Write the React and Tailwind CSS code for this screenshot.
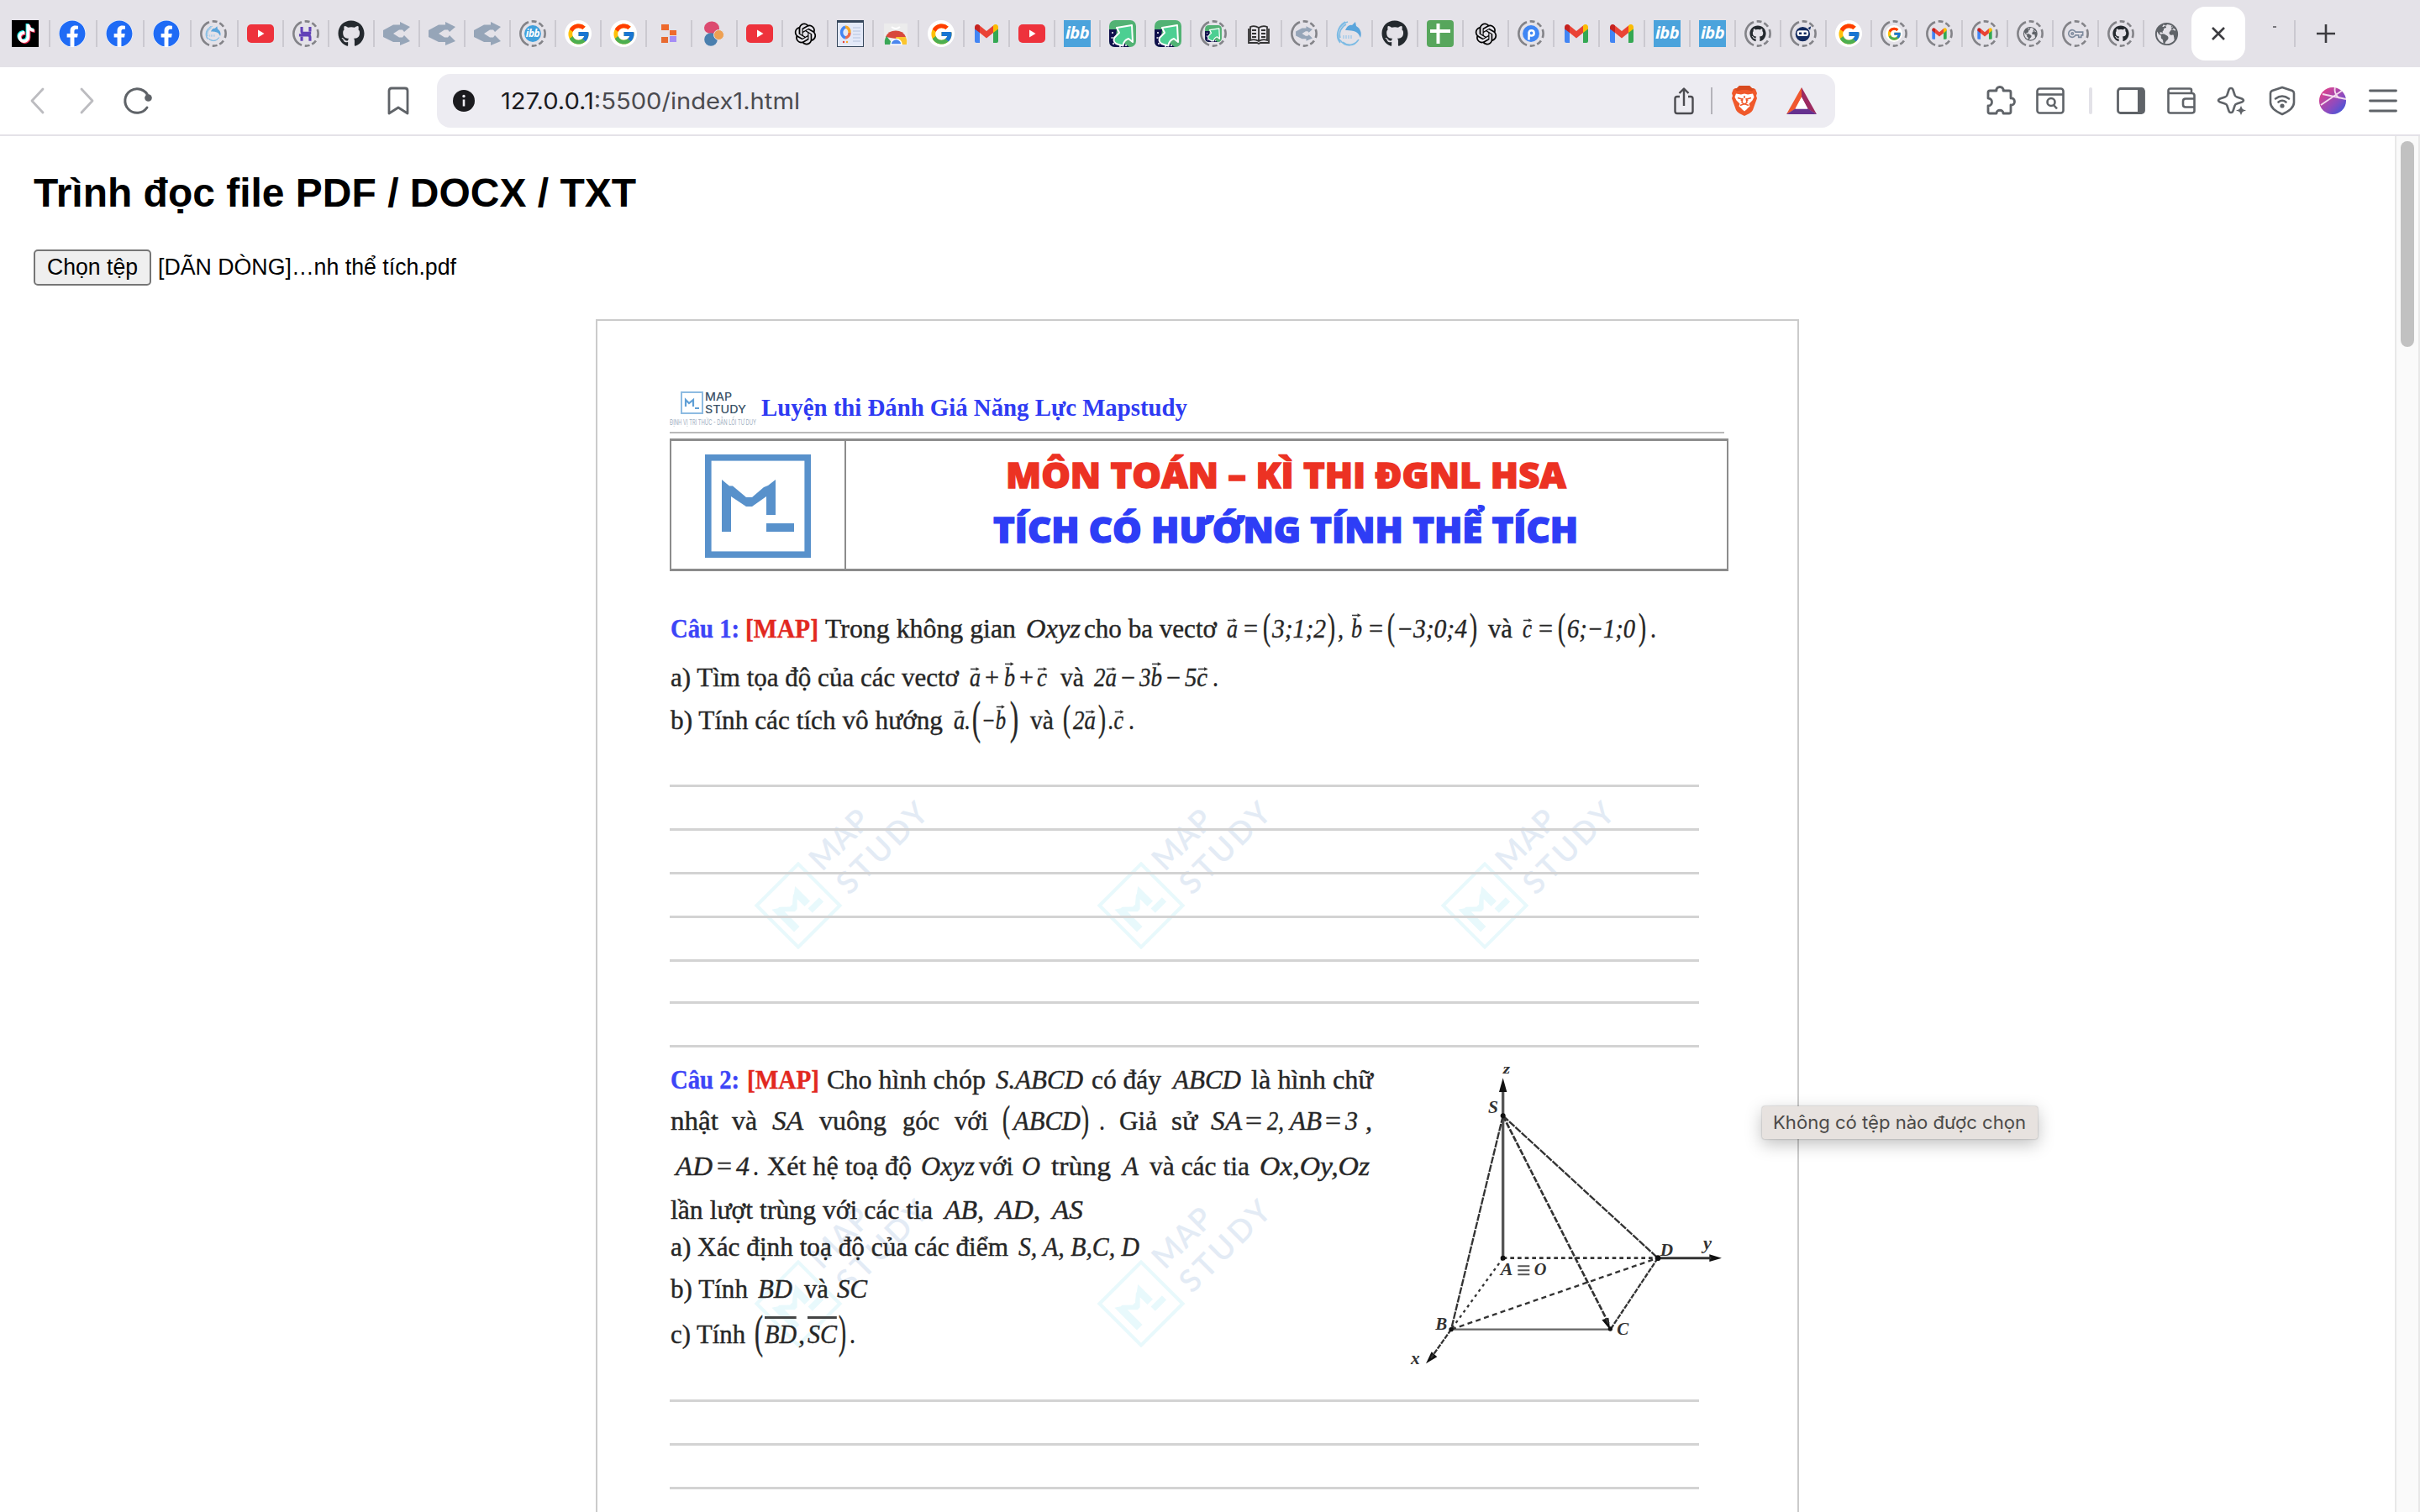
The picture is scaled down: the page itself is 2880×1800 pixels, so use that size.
import { useLayoutEffect, useRef } from "react";
import { FaFacebook, FaGithub, FaTiktok } from "react-icons/fa";
import { FcGoogle } from "react-icons/fc";
import { RiOpenaiFill } from "react-icons/ri";
import { IoEarth } from "react-icons/io5";

/* Stretches a run of text horizontally so that it fills exactly `w` pixels. */
function Fit({ w, children, className = "" }) {
  const ref = useRef(null);
  useLayoutEffect(() => {
    const el = ref.current;
    el.style.transform = "none";
    const natural = el.getBoundingClientRect().width;
    if (natural > 0) el.style.transform = `scaleX(${w / natural})`;
  }, [w]);
  return (
    <span className="inline-block whitespace-nowrap" style={{ width: w }}>
      <span ref={ref} className={`inline-block origin-left whitespace-pre ${className}`}>
        {children}
      </span>
    </span>
  );
}

/* ---------- favicons ---------- */

const YouTube = () => (
  <svg viewBox="0 0 32 32" className="size-8">
    <rect x="0" y="5" width="32" height="22" rx="5" fill="#ee323c" />
    <path d="M13 11.5 20.5 16 13 20.5z" fill="#fff" />
  </svg>
);
const TikTok = () => (
  <div className="relative flex size-8 items-center justify-center bg-black">
    <FaTiktok className="absolute left-[5px] top-[4px] size-[22px] text-[#25f4ee]" />
    <FaTiktok className="absolute left-[7px] top-[6px] size-[22px] text-[#fe2c55]" />
    <FaTiktok className="absolute left-[6px] top-[5px] size-[22px] text-white" />
  </div>
);
const Facebook = () => (
  <div className="flex size-8 items-center justify-center rounded-full bg-white">
    <FaFacebook className="size-8 text-[#1f6bf5]" />
  </div>
);
const Github = () => <FaGithub className="size-8 text-[#24292e]" />;
const Google = () => (
  <div className="flex size-8 items-center justify-center rounded-full bg-white">
    <FcGoogle className="size-[29px]" />
  </div>
);
const OpenAI = () => <RiOpenaiFill className="size-[31px] text-black" />;
const Globe = () => <IoEarth className="size-[31px] text-[#5f6368]" />;
const Gmail = () => (
  <svg viewBox="0 0 32 32" className="size-8">
    <path d="M2 8.5V25q0 2 2 2h4V13.500z" fill="#4285f4" />
    <path d="M30 8.500V25q0 2-2 2h-4V13.500z" fill="#34a853" />
    <path d="M8 6.500 16 13l8-6.500v8.500L16 21.500 8 15z" fill="#ea4335" />
    <path d="M2 8.500C2 5 5.500 4 8 6.300V15l-6-4.500z" fill="#c5221f" />
    <path d="M30 8.500C30 5 26.500 4 24 6.300V15l6-4.500z" fill="#fbbc04" />
  </svg>
);
const CShare = () => (
  <svg viewBox="0 0 32 32" className="size-8">
    <path d="M20 2 32 8 25 14 23 11.500H19L12 16l7 4.500H23L25 18l7 7L20 30V26H12L0 20V12L12 5.500H20z" fill="#96a5b8" />
  </svg>
);
const Ibb = () => (
  <div className="flex size-8 items-center justify-center bg-[#4ba3dc] pb-[3px] font-['Open_Sans',sans-serif] text-[20px] font-bold italic leading-none tracking-tight text-white">
    ibb
  </div>
);
const IbbRound = () => (
  <div className="flex size-8 items-center justify-center overflow-hidden rounded-full bg-[#3fa0dc] pb-[2px] font-['Open_Sans',sans-serif] text-[19px] font-bold italic leading-none tracking-tight text-white">
    ibb
  </div>
);
const Dolphin = () => (
  <svg viewBox="0 0 32 32" className="size-8" fill="none">
    <path d="M14 2C4 5-1 16 5 25M11 2C1 8-1 20 5 27M5 24c6 8 17 8 22-1M8 26c6 5 14 4 18-2M12 5C6 8 3 15 5 21" stroke="#7dbbe4" strokeWidth="1.500" />
    <path d="M11 12C13 7 16 5 19 6l4-4 1 5c5 3 7 8 5 14-2-5-4-7-8-8-4-1-7-1-10-1z" fill="#5aa5dc" />
    <path d="M9 18v4M12 18v4M15 18v4M18 18v4" stroke="#9cc8ea" strokeWidth="1.300" />
  </svg>
);
const PurpleH = () => (
  <svg viewBox="0 0 32 32" className="size-8" fill="none" stroke="#6142b8" strokeWidth="5">
    <path d="M8 3v9q0 3 4 3h14M24 3v9M3 19h17q4 0 4 4v7M8 22v8" />
  </svg>
);
const Blocks = () => (
  <svg viewBox="0 0 32 32" className="size-8">
    <path d="M7 5h9v7h9v6h-8v-6H7z" fill="#ee6a2d" />
    <rect x="7" y="20" width="8" height="7" fill="#e86a30" />
    <rect x="17" y="19" width="8" height="7" fill="#a58df5" />
  </svg>
);
const Circles = () => (
  <svg viewBox="0 0 32 32" className="size-8">
    <path d="M4 9a9 8 0 0 1 18 1q0 4 1 6-5 3-10 0Q4 16 4 9z" fill="#dc4a70" />
    <circle cx="12" cy="23" r="7.800" fill="#4a7fae" />
    <circle cx="21.500" cy="17.500" r="6" fill="#eea052" stroke="#e4e2e8" />
  </svg>
);
const ChartDoc = () => (
  <svg viewBox="0 0 32 32" className="size-8">
    <rect width="32" height="32" fill="#36475c" />
    <rect x="1" y="3" width="30" height="28" fill="#e3e9f8" />
    <g fill="none" strokeWidth="3.500">
      <path d="M10 8a6 6 0 0 1 5 7" stroke="#f9a825" />
      <path d="M15 15a6 6 0 0 1-5 6" stroke="#ee6a4a" />
      <path d="M10 21a7 7 0 0 1 0-13" stroke="#4285f4" />
    </g>
    <path d="M19 9h9M19 13h9M19 17h9M19 21h9M19 25h9" stroke="#c5cfe6" strokeWidth="1.500" />
    <circle cx="8" cy="26" r="1.200" fill="#ea4335" />
    <circle cx="12" cy="26" r="1.200" fill="#f9a825" />
  </svg>
);
const WebStore = () => (
  <svg viewBox="0 0 32 32" className="size-8">
    <rect x="2" y="4" width="28" height="25" fill="#ececec" />
    <path d="M11 8q5 4 10 0" fill="none" stroke="#fff" strokeWidth="2" />
    <path d="M4 20a13 12 0 0 1 24 0l-12 2z" fill="#d8483c" />
    <path d="M3 29q-1-6 2-10l8 10z" fill="#3aa757" />
    <path d="M29 29q1-5-1-9H16l4 9z" fill="#fbc52d" />
    <path d="M10 29a6.500 6.500 0 0 1 13 0z" fill="#4a86ee" stroke="#fff" strokeWidth="1.500" />
  </svg>
);
const GreenArrow = () => (
  <svg viewBox="0 0 32 32" className="size-8">
    <rect width="32" height="32" rx="7" fill="#52b274" />
    <path d="M0 11h9l-1 9 16 12H7q-7 0-7-7z" fill="#10104c" />
    <path d="M9 9 27 6l1 20-5-4q-6 2-6.500 8.500L11 29Q4 27 6 21l6-6z" fill="#4ccf92" stroke="#fff" strokeWidth="2" strokeLinejoin="round" />
    <path d="M3 15h2M2.500 21h2M4 28h2M12 31h2M19 30h2" stroke="#fff" strokeWidth="1.500" />
  </svg>
);
const Book = () => (
  <svg viewBox="0 0 32 32" className="size-8" fill="none" stroke="#333" strokeWidth="1.800">
    <path d="M16 9Q11 6 6 8v16q5-2 10 1 5-3 10-1V8q-5-2-10 1zM16 9v15M4 10v17h10l2 1 2-1h10V10" />
    <path d="M8 12h5M8 16h5M8 20h5M19 12h5M19 16h5M19 20h5" />
  </svg>
);
const Sheets = () => (
  <svg viewBox="0 0 32 32" className="size-8">
    <rect width="32" height="32" rx="4" fill="#57a65c" />
    <path d="M13.500 4v24M4 13h24" stroke="#fff" strokeWidth="4" />
  </svg>
);
const PBlue = () => (
  <svg viewBox="0 0 32 32" className="size-8" fill="none">
    <circle cx="16" cy="16" r="16" fill="#3f86f4" />
    <path d="M12 28V13M12 16a5 5 0 1 0 5-6q-5 0-5 6" stroke="#fff" strokeWidth="4" />
  </svg>
);
const Ninja = () => (
  <svg viewBox="0 0 32 32" className="size-8">
    <circle cx="15" cy="17" r="14" fill="#132b60" />
    <path d="m25 5 6-3-2 7z" fill="#132b60" />
    <rect x="4" y="10" width="22" height="11" rx="5" fill="#fff" />
    <path d="M8 15.500h5M17 15.500h5" stroke="#132b60" strokeWidth="4" />
  </svg>
);
const Key = () => (
  <svg viewBox="0 0 32 32" className="size-8" fill="none" stroke="#7d8a9d" strokeWidth="2.600">
    <path d="M16 13h14v6h-3v4h-5v-4h-6a7 7 0 1 1 0-6z" />
    <circle cx="10" cy="16" r="2" />
  </svg>
);

/* Dashed ring drawn round the icon of an unloaded tab. */
function Ring({ children }) {
  return (
    <div className="relative flex size-8 items-center justify-center">
      <svg viewBox="0 0 32 32" className="absolute inset-0 size-8" fill="none">
        <circle
          cx="16" cy="16" r="14.600" pathLength="360" stroke="#838388" strokeWidth="2.600"
          strokeDasharray="40 15 25 12 23 15 140 15 23 12 25 15" transform="rotate(-20 16 16)"
        />
      </svg>
      <div className="flex size-8 scale-[0.62] items-center justify-center">{children}</div>
    </div>
  );
}
const ring = (Icon) => () => <Ring><Icon /></Ring>;

const TABS = [
  TikTok, Facebook, Facebook, Facebook, ring(Dolphin), YouTube, ring(PurpleH), Github,
  CShare, CShare, CShare, ring(IbbRound), Google, Google, Blocks, Circles,
  YouTube, OpenAI, ChartDoc, WebStore, Google, Gmail, YouTube, Ibb,
  GreenArrow, GreenArrow, ring(GreenArrow), Book, ring(CShare), Dolphin, Github, Sheets,
  OpenAI, ring(PBlue), Gmail, Gmail, Ibb, Ibb, ring(Github), ring(Ninja),
  Google, ring(Google), ring(Gmail), ring(Gmail), ring(Globe), ring(Key), ring(Github), Globe,
];

function TabStrip() {
  return (
    <div className="flex h-20 items-center bg-[#e4e2e8] pl-[2px]">
      {TABS.map((Icon, i) => (
        <div
          key={i}
          className={`flex h-8 shrink-0 items-center border-l-2 pl-[10px] ${i < 5 ? "w-14" : "w-[54px]"} ${i === 0 ? "border-transparent" : "border-[#cbc9d0]"}`}
        >
          <div className="flex size-8 items-center justify-center">
            <Icon />
          </div>
        </div>
      ))}
      <div className="ml-1 flex h-16 w-16 shrink-0 items-center justify-center rounded-[16px] bg-white">
        <svg viewBox="0 0 16 16" className="size-4" stroke="#3c3c40" strokeWidth="2.600">
          <path d="M1 1l14 14M15 1 1 15" />
        </svg>
      </div>
      <div className="mb-4 ml-[33px] h-[2px] w-1 bg-[#77777c]" />
      <div className="ml-[21px] h-8 w-[2px] bg-[#cbc9d0]" />
      <svg viewBox="0 0 22 22" className="ml-[25px] size-[22px]" stroke="#3c3c40" strokeWidth="2.600">
        <path d="M11 0v22M0 11h22" />
      </svg>
    </div>
  );
}

/* ---------- toolbar ---------- */

function Lion() {
  return (
    <svg viewBox="0 0 32 36" className="h-9 w-8">
      <path d="M10 0h12l3 3 4 1 2 5-1 3 1 3-5 14q-1 2-4 4l-6 3-6-3q-3-2-4-4L1 15l1-3-1-3 2-5 4-1z" fill="#f0592b" />
      <path d="M10 0h12l3 3 3 .5-3 3-6-1.500h-6L7 6.500 4 3.500 7 3z" fill="#d84a1f" />
      <path d="M6 9.500l6 1 4-1 4 1 6-1 1.500 4-2 4-4 4 1 3-4 3.500-2.500-2.500-2.500 2.500L9.500 24.500l1-3-4-4-2-4z" fill="#fff" />
      <path d="M8 14.500l5 1.500-1 2M24 14.500 19 16l1 2M16 12v3M14 15l-1 5 3 2 3-2-1-5M11 23.500l5-2 5 2" fill="none" stroke="#f0592b" strokeWidth="1.500" />
      <path d="M12.500 27.500l3.500-2.500 3.500 2.500-3.500 3z" fill="#fff" />
    </svg>
  );
}

function Toolbar() {
  return (
    <div className="flex h-[82px] items-center border-b-2 border-[#e4e2e8] bg-white text-[#5f6368]">
      <svg viewBox="0 0 18 32" className="ml-[35px] h-8 w-[18px]" fill="none" stroke="#bcbcc0" strokeWidth="2.800" strokeLinecap="round" strokeLinejoin="round">
        <path d="M16 2 3 16l13 14" />
      </svg>
      <svg viewBox="0 0 18 32" className="ml-[42px] h-8 w-[18px]" fill="none" stroke="#bcbcc0" strokeWidth="2.800" strokeLinecap="round" strokeLinejoin="round">
        <path d="M2 2l13 14L2 30" />
      </svg>
      <svg viewBox="0 0 36 36" className="ml-[33px] size-9" fill="none" stroke="currentColor" strokeWidth="3">
        <path d="M29 26A14.300 14.300 0 1 1 30.500 13" strokeLinecap="round" />
        <circle cx="30.500" cy="14.500" r="4.300" fill="currentColor" stroke="none" />
      </svg>
      <svg viewBox="0 0 26 36" className="ml-[279px] h-9 w-[26px]" fill="none" stroke="currentColor" strokeWidth="2.800" strokeLinejoin="round">
        <path d="M5 3h16q3 0 3 3v27l-11-7-11 7V6q0-3 3-3z" />
      </svg>

      <div className="ml-[33px] flex h-16 w-[1664px] items-center rounded-[16px] bg-[#edecf2]">
        <svg viewBox="0 0 26 26" className="ml-[19px] size-[26px]">
          <circle cx="13" cy="13" r="13" fill="#1b1b1f" />
          <path d="M13 11.500v8" stroke="#edecf2" strokeWidth="2.600" />
          <circle cx="13" cy="7.500" r="1.700" fill="#edecf2" />
        </svg>
        <div className="ml-[31px] w-[1396px] pt-px font-['Inter',sans-serif] text-[27px] leading-[40px] text-[#4b4b50]">
          <Fit w={356}>
            <span className="text-[#1b1b1f]">127.0.0.1</span>:5500/index1.html
          </Fit>
        </div>
        <svg viewBox="0 0 24 34" className="h-[34px] w-6" fill="none" stroke="#4b4b50" strokeWidth="2.400" strokeLinejoin="round">
          <path d="M7 12H4q-2.500 0-2.500 2.500v15Q1.500 32 4 32h16q2.500 0 2.500-2.500v-15Q22.500 12 20 12h-3M12 23V3M6.500 8 12 2.500 17.500 8" />
        </svg>
        <div className="ml-5 h-8 w-[2px] bg-[#b4b3ba]" />
        <div className="ml-[22px]">
          <Lion />
        </div>
        <svg viewBox="0 0 38 34" className="ml-[33px] h-[34px] w-[38px]">
          <path d="M19 1 1 33l10.500-6L19 13z" fill="#f0582f" />
          <path d="M19 1l18 32-10.500-6L19 13z" fill="#9c2a60" />
          <path d="M1 33h36l-10.500-6.500h-15z" fill="#65318f" />
          <path d="M19 12.500 11.500 26.500h15z" fill="#fff" />
        </svg>
      </div>

      <svg viewBox="0 0 36 36" className="ml-[179px] size-9" fill="none" stroke="currentColor" strokeWidth="2.800" strokeLinejoin="round">
        <path d="M5 6h8c-1-6 9-6 8 0h7q2 0 2 2v7c6-1 6 9 0 8v8q0 2-2 2h-7c0-5-8-5-8 0H5q-2 0-2-2v-7c6 0 6-9 0-9V8q0-2 2-2z" />
      </svg>
      <svg viewBox="0 0 34 34" className="ml-[24px] size-[34px]" fill="none" stroke="currentColor" strokeWidth="2.600">
        <rect x="1.500" y="2.500" width="31" height="29" rx="3" />
        <path d="M1.500 9.500h31" />
        <circle cx="18" cy="18.500" r="4.500" />
        <path d="m21 22 4 4.500" />
      </svg>
      <div className="ml-[29px] h-8 w-1 rounded bg-[#e3e2e8]" />
      <svg viewBox="0 0 34 34" className="ml-[29px] size-[34px]" fill="none" stroke="currentColor" strokeWidth="2.800">
        <rect x="1.500" y="2.500" width="31" height="29" rx="3" />
        <path d="M25 2h6q2 0 2 2v26q0 2-2 2h-6z" fill="currentColor" stroke="none" />
      </svg>
      <svg viewBox="0 0 34 34" className="ml-[26px] size-[34px]" fill="none" stroke="currentColor" strokeWidth="2.600" strokeLinejoin="round">
        <path d="M29 8V4q0-1.500-2-1.500H4Q1.500 2.500 1.500 5v24q0 2.500 2.500 2.500h25q3.500 0 3.500-2.500V10.500Q32.500 8 29 8H4Q1.500 8 1.500 5M32 14.500H22q-3 0-3 3v4q0 3 3 3h10" />
      </svg>
      <svg viewBox="0 0 36 36" className="ml-[25px] size-9" fill="none" stroke="currentColor" strokeWidth="2.600" strokeLinejoin="round">
        <path d="M17 3q2 0 2.500 2l2 6q.5 2 2.500 2.500l6 2q2 1 2 2t-2 2l-6 2q-2 .5-2.500 2.500l-2 6q-.5 2-2.500 2t-2.500-2l-2-6Q12 22 10 21.500l-6-2q-2-1-2-2t2-2l6-2q2-.5 2.500-2.500l2-6Q15 3 17 3z" />
        <path d="m29 22.500 2 5 5 2-5 2-2 5-2-5-5-2 5-2z" fill="currentColor" stroke="#fff" strokeWidth="1" />
      </svg>
      <svg viewBox="0 0 32 36" className="ml-[26px] h-9 w-8" fill="none" stroke="currentColor" strokeWidth="2.600" strokeLinecap="round">
        <path d="M16 2 4 6Q2 7 2 9v11q0 8 14 14 14-6 14-14V9q0-2-2-3z" strokeLinejoin="round" />
        <path d="M8 15.500q8-6 16 0M11.500 19.500q4.500-3.500 9 0" />
        <circle cx="16" cy="24" r="2.600" fill="currentColor" stroke="none" />
      </svg>
      <svg viewBox="0 0 32 32" className="ml-[28px] size-8">
        <defs>
          <linearGradient id="avatar" x1="0" y1="0" x2="1" y2="1">
            <stop offset="0.150" stopColor="#d94390" />
            <stop offset="0.600" stopColor="#8c4bc0" />
            <stop offset="1" stopColor="#2c5be0" />
          </linearGradient>
        </defs>
        <circle cx="16" cy="16" r="16" fill="url(#avatar)" />
        <path d="M2 21 27 4M4 8l28 6M19 0q-2 7 5 13" fill="none" stroke="#f4dcee" strokeWidth="1.800" />
      </svg>
      <svg viewBox="0 0 34 28" className="ml-[27px] h-7 w-[34px]" stroke="currentColor" strokeWidth="2.800" strokeLinecap="round">
        <path d="M1.500 2h31M1.500 14h31M1.500 26h31" />
      </svg>
    </div>
  );
}

/* ---------- document ---------- */

/* A letter with a vector arrow over it. */
function Vec({ children, tall }) {
  return (
    <span className="relative inline-block">
      {children}
      <svg viewBox="0 0 13 5" className={`absolute left-[1px] h-[5px] w-[13px] ${tall ? "top-[1px]" : "top-[7px]"}`}>
        <path d="M0 2.500h9" stroke="#333" strokeWidth="1.500" />
        <path d="M8 .3 13 2.500 8 4.700z" fill="#333" />
      </svg>
    </span>
  );
}
const Bar = ({ children }) => (
  <span className="relative inline-block">
    {children}
    <span className="absolute inset-x-0 top-[-2px] h-[3px] bg-[#444]" />
  </span>
);
const Paren = ({ children, big }) => (
  <span className={`inline-block -translate-y-[3px] not-italic ${big ? "scale-y-[1.800]" : "scale-y-[1.450]"}`}>{children}</span>
);

const I = "italic";
const BLUE = "font-bold text-[#3d45f7]";
const RED = "font-bold text-[#e2281f]";

/* One line of the document: runs given as [left, right, content, classes]. */
function Line({ runs, className }) {
  return (
    <div className={`flex ${className}`}>
      {runs.map(([l, r, content, cls], i) => (
        <span key={i} className="shrink-0" style={{ width: (runs[i + 1]?.[0] ?? r) - l }}>
          <Fit w={r - l} className={cls}>{content}</Fit>
        </span>
      ))}
    </div>
  );
}

const Q1 = [
  ["h-[58px]", [
    [798, 880, "Câu 1:", BLUE], [887, 974, "[MAP]", RED], [982, 1209, "Trong không gian"],
    [1221, 1286, "Oxyz", I], [1290, 1448, "cho ba vectơ"],
    [1460, 1473, <Vec>a</Vec>, I], [1480, 1497, "="], [1503, 1512, <Paren>(</Paren>],
    [1514, 1578, "3;1;2", I], [1580, 1589, <Paren>)</Paren>], [1592, 1599, ",", I],
    [1608, 1621, <Vec tall>b</Vec>, I], [1629, 1646, "="], [1651, 1660, <Paren>(</Paren>],
    [1662, 1746, "−3;0;4", I], [1749, 1758, <Paren>)</Paren>], [1771, 1800, "và"],
    [1812, 1823, <Vec>c</Vec>, I], [1831, 1848, "="], [1854, 1863, <Paren>(</Paren>],
    [1865, 1946, "6;−1;0", I], [1950, 1959, <Paren>)</Paren>], [1964, 1971, "."],
  ]],
  ["h-[51px]", [
    [798, 1141, "a) Tìm tọa độ của các vectơ"],
    [1154, 1167, <Vec>a</Vec>, I], [1172, 1189, "+"], [1195, 1208, <Vec tall>b</Vec>, I],
    [1213, 1230, "+"], [1234, 1246, <Vec>c</Vec>, I], [1262, 1290, "và"],
    [1302, 1329, <>2<Vec>a</Vec></>, I], [1334, 1351, "−"], [1356, 1383, <>3<Vec tall>b</Vec></>, I],
    [1388, 1405, "−"], [1410, 1437, <>5<Vec>c</Vec></>, I], [1443, 1450, "."],
  ]],
  ["h-[51px]", [
    [798, 1122, "b) Tính các tích vô hướng"],
    [1135, 1155, <><Vec>a</Vec>.</>, I], [1157, 1167, <Paren big>(</Paren>],
    [1168, 1197, <>−<Vec tall>b</Vec></>, I], [1202, 1212, <Paren big>)</Paren>],
    [1226, 1254, "và"], [1265, 1274, <Paren>(</Paren>], [1277, 1304, <>2<Vec>a</Vec></>, I],
    [1307, 1316, <Paren>)</Paren>], [1319, 1337, <>.<Vec>c</Vec></>, I], [1343, 1350, "."],
  ]],
];

const Q2 = [
  ["h-[49px]", [
    [798, 880, "Câu 2:", BLUE], [889, 975, "[MAP]", RED], [984, 1173, "Cho hình chóp"],
    [1185, 1289, "S.ABCD", I], [1299, 1382, "có đáy"], [1396, 1477, "ABCD", I], [1489, 1634, "là hình chữ"],
  ]],
  ["h-[54px]", [
    [798, 855, "nhật"], [871, 901, "và"], [919, 956, "SA", I], [975, 1055, "vuông"],
    [1074, 1118, "góc"], [1136, 1176, "với"], [1193, 1202, <Paren>(</Paren>], [1206, 1286, "ABCD", I],
    [1287, 1296, <Paren>)</Paren>], [1308, 1315, "."], [1332, 1377, "Giả"], [1394, 1425, "sử"],
    [1441, 1478, "SA", I], [1482, 1502, "="], [1508, 1528, "2,", I], [1535, 1573, "AB", I],
    [1577, 1596, "="], [1601, 1616, "3", I], [1625, 1633, ",", I],
  ]],
  ["h-[52px]", [
    [804, 848, "AD", I], [853, 871, "="], [876, 892, "4", I], [896, 903, "."], [913, 1085, "Xét hệ toạ độ"],
    [1096, 1160, "Oxyz", I], [1165, 1206, "với"], [1216, 1238, "O", I], [1251, 1322, "trùng"],
    [1336, 1355, "A", I], [1368, 1487, "và các tia"], [1499, 1630, "Ox,Oy,Oz", I],
  ]],
  ["h-[44px]", [
    [798, 1110, "lần lượt trùng với các tia"], [1124, 1171, "AB,", I], [1185, 1238, "AD,", I], [1252, 1289, "AS", I],
  ]],
  ["h-[50px]", [
    [798, 1200, "a) Xác định toạ độ của các điểm"], [1212, 1356, "S, A, B,C, D", I],
  ]],
  ["h-[54px]", [
    [798, 890, "b) Tính"], [902, 943, "BD", I], [957, 986, "và"], [996, 1032, "SC", I],
  ]],
  ["h-[40px]", [
    [798, 887, "c) Tính"], [898, 908, <Paren big>(</Paren>], [910, 948, <Bar>BD</Bar>, I], [950, 958, ",", I],
    [961, 996, <Bar>SC</Bar>, I], [998, 1007, <Paren big>)</Paren>], [1011, 1018, "."],
  ]],
];

function LogoMark() {
  return (
    <svg viewBox="0 0 126 123" className="h-[123px] w-[126px]">
      <rect x="3.800" y="3.800" width="118.400" height="115.400" fill="none" stroke="#5891cb" strokeWidth="7.600" />
      <path d="M20 30 29 37.500H33L49 51H56L70 39 75 37 84 30V72H73V50L56 62H49L31 50V92H20z" fill="#5891cb" />
      <rect x="73" y="82" width="33" height="10" fill="#5891cb" />
    </svg>
  );
}

function Figure() {
  return (
    <svg viewBox="100 60 1140 1110" className="h-[370px] w-[380px]" fill="none" stroke="#333" strokeWidth="7">
      <path d="M447 170V773" stroke="#555" strokeWidth="10" />
      <path d="M447 130 433 180h28zM1228 773l-44-13v26zM172 1150l40-24-20-18zM830 1030l-6-44-24 8z" fill="#111" stroke="none" />
      <path d="M1000 773h190" strokeWidth="9" />
      <path d="M262 1028H830" stroke="#666" />
      <path d="M447 265 262 1028M447 265 1000 773" strokeDasharray="26 4" />
      <path d="M447 265 826 1010" strokeDasharray="22 5" strokeWidth="8" />
      <path d="M1000 773 832 1026M262 1028 190 1130" strokeDasharray="18 4" />
      <path d="M447 773h553" strokeDasharray="14 12" strokeWidth="8" />
      <path d="M447 773 262 1028" strokeDasharray="10 13" />
      <path d="M262 1028 1000 773" strokeDasharray="18 13" />
      <g fill="#111" stroke="none">
        <circle cx="447" cy="265" r="9" /><circle cx="447" cy="773" r="9" />
        <circle cx="1000" cy="773" r="10" /><circle cx="262" cy="1028" r="8" /><circle cx="830" cy="1026" r="8" />
      </g>
      <path d="M500 802h42M500 817h42M500 832h42" stroke="#555" strokeWidth="6" />
      <g fill="#333" stroke="none" className="font-['Liberation_Serif',serif] text-[60px] font-bold italic">
        <text x="447" y="114" textLength="25" lengthAdjust="spacingAndGlyphs" className="text-[48px]">z</text>
        <text x="394" y="254" textLength="36" lengthAdjust="spacingAndGlyphs">S</text>
        <text x="438" y="834" textLength="44" lengthAdjust="spacingAndGlyphs">A</text>
        <text x="558" y="834" textLength="44" lengthAdjust="spacingAndGlyphs">O</text>
        <text x="1008" y="766" textLength="46" lengthAdjust="spacingAndGlyphs">D</text>
        <text x="1162" y="742" textLength="30" lengthAdjust="spacingAndGlyphs">y</text>
        <text x="206" y="1030" textLength="42" lengthAdjust="spacingAndGlyphs">B</text>
        <text x="854" y="1048" textLength="42" lengthAdjust="spacingAndGlyphs">C</text>
        <text x="118" y="1152" textLength="32" lengthAdjust="spacingAndGlyphs">x</text>
      </g>
    </svg>
  );
}

function Watermark({ className }) {
  return (
    <svg viewBox="-60 -180 260 260" className={`absolute h-[260px] w-[260px] ${className}`}>
      <g transform="rotate(-45)">
        <rect x="-35" y="-35" width="70" height="70" fill="none" stroke="#e8f9fc" strokeWidth="4" />
        <g transform="translate(-36 -35) scale(0.571)">
          <path d="M18 28 29 35.500H33L49 51H56L70 39 75 37 87 28V72H71V50L56 65H49L34 50V94H18z" fill="#e8f9fc" />
          <rect x="73" y="80" width="33" height="13" fill="#e8f9fc" />
        </g>
        <g fill="#e3ebf5" className="font-['Lato',sans-serif] text-[37px] font-semibold">
          <text x="48" y="-8" textLength="84">MAP</text>
          <text x="51" y="35" textLength="136">STUDY</text>
        </g>
      </g>
    </svg>
  );
}

function Rules({ gaps }) {
  return (
    <div className="w-[1225px]">
      {gaps.map((g, i) => (
        <div key={i} className={`${g} border-t-[3px] border-[#d3d3d3]`} />
      ))}
    </div>
  );
}

function Tagline() {
  return (
    <div className="h-[12px] font-['Inter',sans-serif] text-[9px] leading-[12px] text-[#9fb0bf]">
      <Fit w={103}>ĐỊNH VỊ TRI THỨC - DẪN LỐI TƯ DUY</Fit>
    </div>
  );
}

function Document() {
  return (
    <div className="relative ml-[709px] mt-[40px] h-[1500px] w-[1432px] border-2 border-[#cbcbcb] bg-white pl-[86px] font-['Liberation_Serif',serif] text-[31px] leading-[40px] text-[#262626]">
      <Watermark className="left-[179px] top-[516px]" />
      <Watermark className="left-[587px] top-[516px]" />
      <Watermark className="left-[996px] top-[516px]" />
      <Watermark className="left-[179px] top-[990px]" />
      <Watermark className="left-[587px] top-[990px]" />

      <div className="relative">
        <div className="flex h-[134px] w-[1255px] items-end border-b-2 border-[#b9b9b9]">
          <div className="w-[109px] pb-[5px]">
            <div className="mb-[4px] ml-[13px] flex gap-[2px]">
              <svg viewBox="0 0 27 27" className="size-[27px]" fill="none">
                <rect x="1" y="1" width="25" height="25" stroke="#8dbbe2" strokeWidth="2" />
                <path d="M6 18V10l4 4 5-4v8M17 20h5" stroke="#5f9fd6" strokeWidth="2.200" />
              </svg>
              <div className="flex h-[27px] flex-col justify-between font-['Inter',sans-serif] text-[13px] font-medium leading-[12px] text-[#3b5368]">
                <Fit w={32}>MAP</Fit>
                <Fit w={49}>STUDY</Fit>
              </div>
            </div>
            <Tagline />
          </div>
          <div className="h-[49px] text-[30px] font-bold text-[#2f3bf3]">
            <Fit w={507}>Luyện thi Đánh Giá Năng Lực Mapstudy</Fit>
          </div>
        </div>

        <div className="mt-[6px] flex h-[158px] w-[1260px] border-[3px] border-x-2 border-[#8c8c8c]">
          <div className="flex w-[208px] items-center justify-center border-r-2 border-[#8c8c8c] pt-[3px]">
            <LogoMark />
          </div>
          <div className="flex flex-1 flex-col pt-[7px] font-['Open_Sans',sans-serif] text-[43px] font-extrabold leading-[65px] [-webkit-text-stroke:1.4px_currentColor]">
            <span className="ml-[190px] h-[65px] text-[#ec3223]"><Fit w={667}>MÔN TOÁN – KÌ THI ĐGNL HSA</Fit></span>
            <span className="ml-[175px] h-[65px] text-[#2e3df6]"><Fit w={696}>TÍCH CÓ HƯỚNG TÍNH THỂ TÍCH</Fit></span>
          </div>
        </div>

        <div className="mt-[49px] pl-[1px] [-webkit-text-stroke:0.4px_currentColor]">
          {Q1.map(([h, runs], i) => <Line key={i} runs={runs} className={h} />)}
        </div>

        <div className="mt-[45px]">
          <Rules gaps={["h-[52px]", "h-[52px]", "h-[52px]", "h-[52px]", "h-[50px]", "h-[52px]", "h-[3px]"]} />
        </div>

        <div className="mt-[19px] flex h-[400px]">
          <div className="w-[842px] pl-[1px] [-webkit-text-stroke:0.4px_currentColor]">
            {Q2.map(([h, runs], i) => <Line key={i} runs={runs} className={i === 2 ? `${h} pl-[6px]` : h} />)}
          </div>
          <div className="ml-[34px] mt-[-6px]">
            <Figure />
          </div>
        </div>

        <Rules gaps={["h-[52px]", "h-[52px]", "h-[52px]"]} />
      </div>
    </div>
  );
}

export default function App() {
  return (
    <div className="relative h-[1800px] w-[2880px] overflow-hidden bg-white">
      <TabStrip />
      <Toolbar />
      <div className="flex h-[1638px]">
        <div className="w-[2850px] overflow-hidden font-['Liberation_Sans',sans-serif] text-black">
          <h1 className="ml-10 mt-[40px] text-[48px] font-bold leading-[56px]">
            <Fit w={717}>Trình đọc file PDF / DOCX / TXT</Fit>
          </h1>
          <div className="ml-10 mt-[39px] flex h-[43px] items-center text-[27px] leading-[36px]">
            <button className="flex h-[43px] w-[140px] items-center justify-center rounded-[5px] border-2 border-[#767676] bg-[#efefef] pb-px">
              <Fit w={108}>Chọn tệp</Fit>
            </button>
            <span className="ml-[8px] pb-px">
              <Fit w={355}>[DÃN DÒNG]…nh thể tích.pdf</Fit>
            </span>
          </div>
          <Document />
        </div>
        <div className="flex w-[30px] justify-center border-x-2 border-[#e8e8e8] bg-[#fafafa] pt-[6px]">
          <div className="h-[245px] w-4 rounded-full bg-[#c1c1c1]" />
        </div>
      </div>

      <div className="absolute left-[2097px] top-[1317px] flex h-[39px] w-[328px] items-center justify-center rounded-[3px] bg-[#e7e2df] pb-px pr-[2px] font-['Inter',sans-serif] text-[22px] leading-[30px] text-[#4b4a49] shadow-[0_6px_20px_rgba(0,0,0,0.25),0_0_2px_rgba(0,0,0,0.35)]">
        <Fit w={301}>Không có tệp nào được chọn</Fit>
      </div>
    </div>
  );
}
